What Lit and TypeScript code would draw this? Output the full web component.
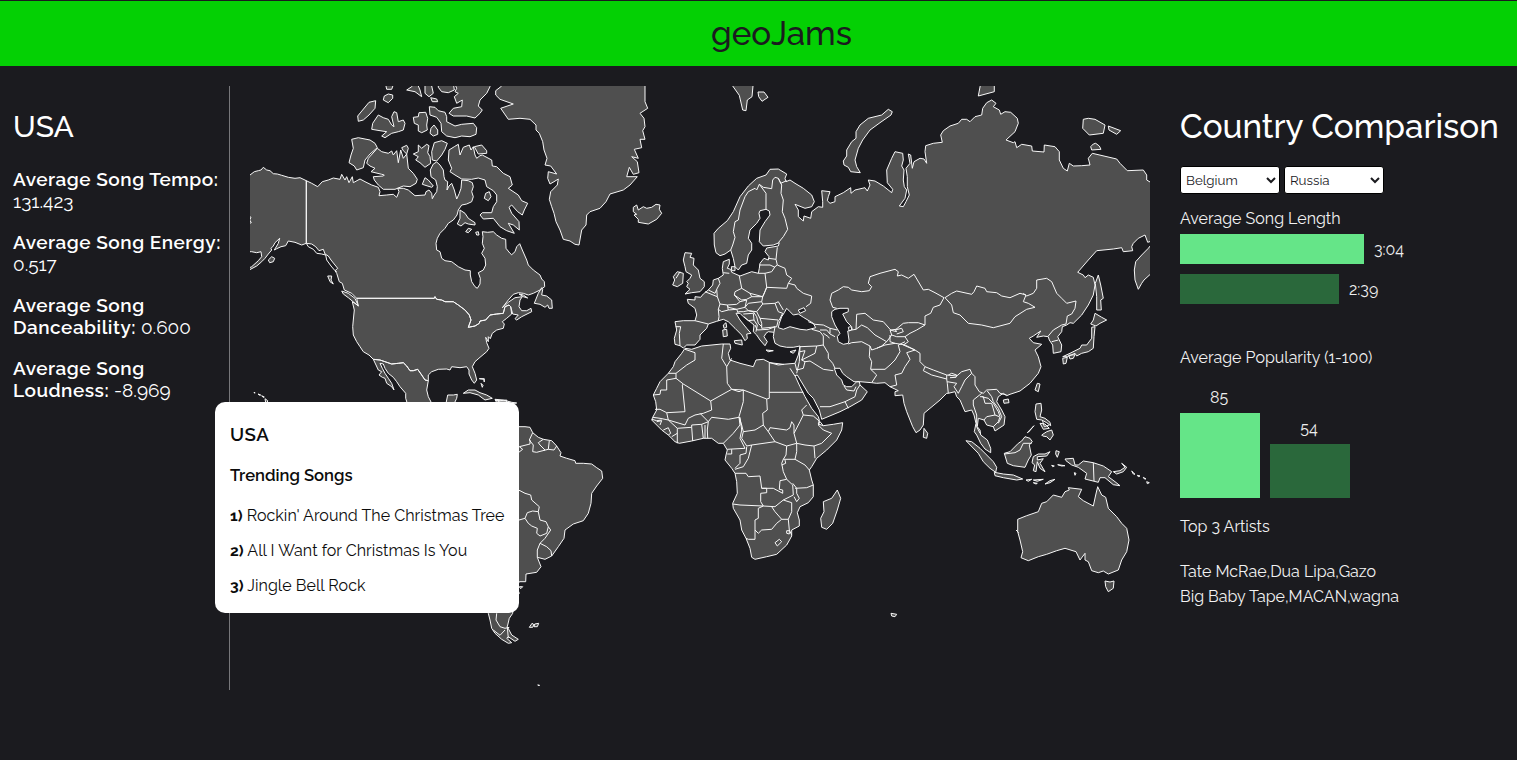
import { LitElement, html, svg, css } from "lit";
import { customElement, property } from "lit/decorators.js";

// Map outlines are digitised on overlapping sheets, three units per map pixel.
const SHEETS: Record<string, [number, number]> = {
  A: [245, 80], B: [245, 240], C: [480, 80], D: [480, 400], E: [640, 150],
  F: [640, 330], G: [780, 80], H: [780, 230], I: [950, 380],
};

function pts(sheet: string, list: string): string {
  const [ox, oy] = SHEETS[sheet];
  return list.trim().split(/\s+/).map((p) => {
    const [x, y] = p.split(",").map(Number);
    return (ox + x / 3).toFixed(1) + "," + (oy + y / 3).toFixed(1);
  }).join(" ");
}
const area = (...parts: string[]) => {
  const out: string[] = [];
  for (let i = 0; i < parts.length; i += 2) out.push(pts(parts[i], parts[i + 1]));
  return "M" + out.join(" ") + "Z";
};
const areas = (sheet: string, lists: string) =>
  lists.split("|").map((l) => area(sheet, l)).join("");
const lines = (sheet: string, lists: string) =>
  lists.split("|").map((l) => "M" + pts(sheet, l)).join("");

const LAND = [
  // Alaska
  area("A", "10,287 15,285 28,275 40,272 48,270 55,262 65,270 75,272 85,281 97,282 110,286 130,292 150,295 165,293 184,302 184,490 170,495 150,487 130,483 122,497 108,500 95,506 88,510 100,490 104,475 90,488 85,498 78,505 80,510 70,522 60,535 50,545 35,558 18,567 10,572 10,565 20,560 40,542 50,530 48,515 35,518 20,515 10,515"),
  areas("A", "70,540 80,530 89,535 85,545 74,548"),
  // Canada
  area("A", "184,302 200,310 218,320 232,305 250,300 265,294 285,298 290,283 300,300 305,290 312,308 322,290 325,308 345,297 360,305 380,315 400,322 405,335 402,347 425,345 445,343 455,352 462,335 458,325 475,325 490,330 510,347 540,345 543,335 552,330 560,340 562,356 568,345 575,335 577,320 572,300 558,290 556,270 565,252 575,246 585,255 595,270 597,290 600,300 608,305 606,330 612,318 620,310 628,330 635,357 643,340 648,325 650,300 670,302 682,308 685,320 680,335 685,350 680,365 665,372 650,375 640,390 636,405 625,420 610,430 600,445 585,460 577,475 573,490 575,510 585,515 590,535 600,542 620,545 640,560 660,570 676,572 676,585 680,605 690,620 697,625 705,612 706,595 700,578 715,570 722,555 720,535 710,520 718,505 712,490 714,470 712,455 728,457 745,455 755,465 770,475 782,478 783,505 795,520 800,524 810,515 815,500 824,491 832,510 845,540 850,555 865,570 885,585 890,597 898,605 899,620 885,630",
    "B", "865,160 850,165 835,160 820,158 805,163 790,180 772,203 790,187 810,173 832,170 825,180 822,200 830,212 845,212 858,205 860,215 830,230 815,240 810,236 820,225 803,222 797,200 792,195 780,200 775,220 755,222 735,225 722,240 705,243 703,250 690,258 670,262 678,240 673,225 660,210 640,195 625,185 600,185 590,180 575,178 570,170 568,175 335,175 320,160 298,150 292,130 283,125 275,100 270,92 278,85 270,75 258,60 250,48 240,42 235,28 222,32 212,20 200,12 184,10"),
  // United States
  area("B", "335,175 568,175 570,170 575,178 590,180 600,185 625,185 640,195 660,210 673,225 678,240 670,262 690,258 703,250 705,243 722,240 735,225 755,222 775,220 780,200 792,195 797,200 800,222 785,235 772,245 778,252 775,265 755,270 742,280 736,296 730,290 730,305 722,292 725,308 732,325 725,335 705,352 690,365 682,380 690,400 695,420 688,430 680,420 672,402 672,390 665,380 645,383 620,380 615,390 605,387 580,388 560,395 550,405 550,422 540,420 530,405 518,388 505,392 495,392 485,378 475,368 460,370 440,372 405,360 385,358 372,345 355,335 345,320 335,305 325,285 323,260 325,240 328,210 322,185 330,190 340,198"),
  area("B", "385,358 405,360 440,372 460,370 475,368 485,378 495,392 505,392 518,388 530,405 540,420 550,422 545,450 550,470 560,490 600,510 490,500 482,475 482,460 465,440 455,425 445,412 430,400 420,385 415,372 405,370 412,385 420,400 430,415 440,430 447,450 440,440 425,430 420,415 412,412 402,405 410,395 400,390 393,375"),
  areas("B", "868,190 880,160 890,143 893,148 890,165 905,168 920,180 922,205 912,205 908,195 900,202 885,193|290,153 310,160 330,175 340,198 330,190 310,173 295,162|248,108 260,108 258,120 265,132 255,125|603,490 608,465 625,465 637,463 635,475 628,490|655,460 670,450 690,450 705,458 725,465 742,475 720,480 700,465 675,458|750,478 775,480 800,487 815,489 790,492 755,488|27,457 30,458 29,460|39,462 47,465 44,466|50,467 58,471 54,472|60,476 68,482 66,490 62,488|822,162 835,165 848,174 835,170|703,416 718,416 718,426 716,418|708,430 714,436 712,442"),
  // Arctic archipelago
  areas("A", "320,178 340,173 375,180 390,190 397,203 375,222 360,240 355,263 335,270 328,258 312,248 318,225 325,205|397,205 410,215 430,220 440,213 445,225 455,212 460,248 467,210 475,235 485,222 490,265 505,280 517,298 513,310 495,320 475,318 450,328 415,328 400,315 388,300 385,290 415,288 418,285 410,283 378,275 390,265 375,258 365,250 370,235|470,203 485,196 490,205 485,222 475,212|372,67 392,62 390,85 372,105 355,120 340,124 338,108|430,42 443,45 443,55 430,68 415,60 418,48|422,14 445,14 440,28 425,28|400,105 415,113 430,118 440,135 447,140 440,110 447,95 455,98 460,125 475,120 480,130 475,150 460,155 440,160 420,173 410,168 425,155 405,152 380,148 383,130|505,112 520,110 522,98 542,97 548,115 545,135 547,150 530,158 520,153 520,135 508,130|567,135 578,150 578,163 565,168 555,160 558,145|553,80 570,82 580,92 600,97 605,110 605,125 630,138 650,133 685,130 695,143 693,163 675,170 650,168 630,173 605,168 590,155 588,130 575,112 555,105|628,8 635,25 630,35 640,40 628,50 635,70 652,60 650,80 625,85 612,100 625,108 665,108 690,114 705,100 712,90 700,78 705,60 725,40 735,20 733,8|485,30 500,20 510,8 520,18 525,30 530,50 510,35|540,8 560,18 565,40 552,50 540,40|557,53 575,57 578,65 562,65|580,8 580,22 590,35 610,38 628,30 625,8|520,195 530,205 545,193 552,197 548,218 555,230 557,250 540,262 525,248 512,240 520,230 505,222 520,215|568,188 590,182 607,190 600,208 590,225 575,243 562,240 560,215|540,293 550,300 565,318 560,322 532,313|655,202 673,195 678,210 685,200 690,225 695,235 705,227 712,225 740,240 742,258 755,260 775,280 795,290 802,315 790,325 820,345 830,362 848,370 838,390 832,405 818,395 800,375 792,382 800,400 822,425 823,450 805,435 790,430 808,460 785,452 765,440 745,415 715,417 705,405 712,398 740,398 745,380 755,365 755,345 745,332 725,320 720,300 700,294 680,298 650,297 630,285 615,275 620,265 610,240 612,210 628,200 640,193 645,225|688,200 710,195 725,212 725,220 700,222|645,390 660,400 670,415 690,428 690,435 670,432 660,428 648,438 637,432 645,415|722,340 733,335 738,350 730,362 718,355|662,455 670,445 680,448 670,458|692,457 700,455 702,465 695,465|10,407 18,412 14,420 19,428 10,432"),
  // Greenland and Iceland
  areas("C", "65,10 65,18 47,32 47,45 60,58 100,72 62,85 85,118 120,115 150,118 168,135 168,150 178,160 188,185 192,210 201,235 195,255 212,258 230,282 205,275 203,295 210,312 222,305 235,297 232,315 212,335 208,358 215,380 222,400 228,425 240,450 250,478 270,483 285,493 297,495 305,450 318,435 320,405 330,395 360,385 378,365 390,342 430,330 450,315 472,290 440,290 448,262 460,283 477,278 472,245 455,230 475,235 463,208 485,203 480,178 495,178 488,152 495,140 492,115 480,100 503,85 495,65 495,10|460,382 470,375 475,390 490,380 500,385 515,382 528,373 540,375 538,388 545,400 530,418 505,432 475,427 475,418 462,405 470,403 460,395"),
  // South America
  area("D", "20,80 100,80 120,80 135,80 150,82 158,98 175,112 190,118 215,122 230,138 243,158 240,168 260,175 285,182 287,190 310,190 335,192 350,203 365,213 368,235 350,258 335,280 333,310 325,340 310,362 280,372 255,390 252,415 235,440 215,468 195,478 172,472 183,500 170,517 138,522 137,545 118,545 110,560 118,580 100,600 98,640 88,655 82,680 95,705 115,718 105,724 85,710 80,715 95,728 85,730 65,718 45,700 35,685 30,660 25,640 20,560"),
  areas("D", "148,682 156,670 162,674 158,682|162,680 164,672 176,670 172,680|118,560 128,560 122,566|173,855 179,856 178,857|45,0 60,2 80,0 80,6 60,6"),
  // Eurasia and Africa
  area("E", "272,300 255,312 240,317 228,308 223,285 222,250 235,235 262,212 280,185 300,140 325,108 350,85 378,75 390,58 415,57 440,72 435,85 438,95 450,90 465,100 490,115 515,135 523,155 515,170 495,175 465,163 475,180 475,200 490,213 492,198 512,205 515,185 535,170 548,172 548,155 545,122 570,125 565,140 562,152 570,160 585,155",
    "G", "165,350 190,338 212,323 213,340 225,330 255,323 262,333 270,315 265,300 285,303 310,318 335,338 338,328 322,308 320,270 335,235 345,215 368,220 370,240 365,258 372,270 370,300 373,320 380,330 375,355 358,378 370,380 378,365 388,345 382,320 382,290 378,265 390,250 385,222 392,225 397,265 402,245 420,235 432,237 440,250 435,215 437,197 460,190 487,187 482,165 490,152 510,138 535,130 545,118 560,118 570,125 585,110 605,105 608,85 620,68 635,60 648,70 640,80 658,90 662,103 675,95 692,97 712,115 715,130 705,155 678,180 700,188 705,185 710,203 725,193 755,198 757,213 792,216 793,195 825,200 838,215 838,240 850,265 862,273 868,250 880,258 905,257 930,255 925,235 937,220 1010,237 1020,250 1042,272 1090,270 1100,285 1100,300 1125,315 1125,480 1103,487 1095,465 1075,475 1060,490 1055,500 1058,512 1030,515 1025,503 1000,507 950,512 925,540 893,577",
    "H", "910,135 915,143 925,135 940,142 945,165 940,195 925,225 905,255 880,280 870,278 860,285 847,290 845,305 833,320 845,345 843,365 820,370 818,345 808,330 805,320 790,318 770,322 782,303 760,318 748,325 760,338 785,343 765,360 775,380 783,410 775,430 750,460 720,483 690,493 680,497 670,490 655,500 650,515 665,540 675,560 672,585 645,603 640,590 620,585 612,570 595,565 592,590",
    "I", "90,150 92,165 112,180 122,205 122,218 105,207 92,190 80,165 73,155 78,130 72,105 65,90 45,95 30,60 20,50",
    "H", "525,485 505,490 500,490 480,510 450,535 432,550 430,585 420,600 408,608 398,590 380,545 372,520 368,495 345,497 345,485 355,482 330,470 315,458 290,460 275,458 240,455 222,455 200,440 188,430 180,415 163,415 170,435 185,450 190,465 200,470 215,470 230,455 238,455 240,465 262,485 245,510 210,530 180,545 125,568 118,540 100,505 85,490 70,465 52,435 45,437 60,470 75,500 95,535 115,560 118,570 115,582 130,587",
    "F", "550,287 580,283 608,278 605,300 590,330 560,360 530,385 515,410 508,420 515,450 520,465 520,500 505,518 480,530 472,548 478,570 478,588 455,600 455,618 440,645 410,673 380,680 345,688 335,682 330,655 318,625 305,600 300,570 280,535 278,520 292,490 290,455 285,430 275,415 255,390 258,375 262,360 250,340 235,340 215,325 190,325 155,333 118,340 105,335 85,315 65,300 50,285 35,270 38,262 50,240 47,215 40,195 50,175 60,155 85,130 100,110 105,95 125,70 135,55 155,58 185,48 245,42 270,42 272,55 265,70 270,90 300,100 340,110 348,90 370,88 390,98 430,103 465,100 475,75",
    "E", "480,588 460,592 440,592 420,588 405,580 400,560 402,547 385,545 378,550 372,560 382,575 375,587 360,570 350,555 340,545 342,525 330,515 310,500 300,490 288,490 300,510 320,535 333,550 320,552 322,565 315,572 305,555 285,535 265,515 250,508 230,514 205,522 200,535 180,555 180,568 165,585 140,585 130,594 120,587 105,583 103,565 110,540 105,515 130,512 165,512 170,495 165,475 145,460 142,448 165,450 165,440 182,442 190,432 205,420 218,405 220,390 235,385 250,375 247,355 250,335 268,328 268,342 262,355 272,358 275,367 300,378 335,365 355,370 358,355 360,340 372,325 385,330 387,320 375,305 380,294 415,288 418,278 400,285 370,288 358,275 360,240 375,215 390,195 388,183 378,178 360,182 357,190 360,205 350,220 330,240 325,265 335,280 335,300 325,315 320,340 305,345 295,360 285,350 280,325"),
  areas("E", "135,308 155,310 150,322 162,325 160,345 175,360 180,385 193,395 193,410 180,425 155,428 135,432 150,418 140,410 145,400 140,395 150,385 155,375 138,365 135,350 130,330|112,365 130,370 128,400 112,410 98,405 104,390 100,380|274,350 285,350 285,362 275,362|248,540 260,538 262,558 250,560|250,525 258,518 260,532 252,535|283,572 305,570 307,585 285,580"),
  areas("F", "378,60 400,62 385,65|450,65 468,60 460,70|592,480 602,505 592,540 578,580 560,598 545,592 542,565 552,545 550,515 575,505"),
  areas("G", "602,10 643,10 643,35 595,48|910,118 925,115 945,118 975,135 970,160 928,165 908,145|985,138 1022,152 1010,163 987,150|932,200 940,192 947,190 958,198 963,208 935,210|325,88 337,95 333,105 300,128 270,150 248,180 235,205 225,240 230,260 241,278 212,275 205,262 192,255 190,243 200,228 200,210 215,185 228,175 228,155 240,135 265,115 305,105|1125,480 1105,505 1085,525 1067,545 1063,570 1065,600 1075,628 1085,610 1092,600 1125,570|-142,18 -122,46 -112,90 -102,92 -98,60 -84,50 -80,8 -142,8|-66,36 -48,36 -36,52 -54,64 -64,50"),
  areas("H", "955,135 962,165 970,205 962,210 964,240 950,240 950,200 946,160|945,250 965,262 980,270 960,280 948,288 932,282 940,270|935,292 945,290 942,320 940,355 925,365 905,370 890,378 885,370 862,380 848,380 870,370 900,355 905,345 920,345 935,325|848,385 862,382 858,400 850,402|866,376 885,374 880,385 870,387|772,460 780,462 775,485 765,480|670,510 685,507 687,518 672,520|432,595 443,610 440,625 430,622|333,1150 350,1153 345,1160 335,1158"),
  areas("I", "258,72 273,70 275,90 270,110 285,115 300,127 302,137 290,128 275,120 260,118 255,95|270,130 285,132 298,145 280,148|275,165 290,155 305,150 310,165 300,180 290,170 278,168|232,158 252,137 236,156|163,220 180,215 205,190 215,183 225,170 240,175 247,185 238,195 244,225 235,240 225,262 190,257 172,250|48,182 65,185 90,205 110,225 130,245 140,262 137,277 120,265 100,245 85,220|133,277 160,282 190,285 218,297 200,300 160,293 135,287|228,300 245,298 235,304|250,300 280,298 262,304|250,308 262,310 258,312|285,312 300,302 315,298 300,308|250,230 265,222 285,222 300,215 290,228 262,230 262,240 280,236 270,250 285,275 270,265 262,245 258,275 250,272 254,255 246,248|318,212 328,215 322,232 317,222|323,254 345,257 335,258|305,256 313,258 308,260|345,237 370,235 375,255 385,255 400,243 430,248 460,258 485,275 475,290 495,305 510,317 490,314 465,293 450,293 445,307 405,297 410,280 385,262 365,255 348,242|490,275 510,272 525,262 515,250 530,262 520,275 500,282|545,273 555,283 550,282|562,286 570,288 565,290|580,292 588,297 582,296|590,305 598,308 592,311|373,278 378,280 375,286|203,418 230,407 265,395 275,370 290,365 310,345 335,352 345,335 358,330 355,323 395,328 385,350 400,362 430,378 437,345 443,320 455,345 467,352 475,385 500,410 515,430 530,445 537,480 530,515 515,540 505,570 475,582 460,573 445,578 425,572 415,545 405,540 405,520 390,540 378,515 345,505 320,512 290,523 265,530 235,542 213,533 218,515 210,480 203,455|465,603 480,606 492,603 490,625 475,635 467,620"),
].join("");

const SEAS = areas("H", "155,245 165,238 180,235 205,235 205,245 188,252 200,275 215,290 215,300 203,303 207,330 205,340 190,343 175,335 172,320 180,310 165,285 155,260|205,292 212,290 217,298 208,303")
  + areas("E", "418,520 425,500 433,488 440,475 450,485 460,495 475,492 490,502 520,520 527,533 500,540 480,538 450,530 430,538 415,533|475,480 492,473 497,482 480,490");

const BORDERS = [
  lines("A", "184,490 190,500 205,508 215,520 230,522 242,525 245,540 258,558 270,572 275,575"),
  lines("D", "158,98 148,120 160,135 158,155 170,157 188,152 195,150 180,135 175,128 190,118|188,152 205,148 208,122|205,148 222,150 230,138|115,158 128,148 118,140 150,132 150,120|110,268 120,272 135,280 152,285 155,300 178,320 175,335 158,333 142,338 135,355 110,362|175,335 180,360 198,365 205,380 200,400 180,408 170,400 172,385 155,378 145,370 135,355|205,380 212,390 195,415 180,430 172,450 172,472|180,430 200,440 213,452 215,468|50,640 48,660 60,680 75,685 88,682|40,690 60,706 75,690|82,680 85,715"),
  lines("E", "272,300 278,285 285,262 280,245 285,215 295,210 300,180 315,140 325,125 345,115 350,120 358,103 370,112 395,116 398,90 405,82 415,85 422,100 440,92|358,103 378,130 378,178|415,85 425,105 423,130 430,150 427,185 435,205 443,238 430,260 415,278|250,368 268,370|235,385 240,400 230,418 232,440 240,462 262,465 290,463 300,455 283,435 285,425 305,415 298,378|305,415 330,430 368,440 380,412 375,370|283,435 305,450 320,448 335,440 330,430|195,425 232,440|205,420 225,430 230,418|240,462 235,478 237,500 235,512|165,512 205,522|107,530 122,530 118,550 120,587|235,478 245,485 265,480 262,465|262,465 265,472 290,478 315,472 320,450 300,455|265,480 290,478 295,490|315,472 325,460 365,455 368,462 350,485 325,482 315,472|335,440 368,440 365,455|368,462 405,460 415,485 428,490 418,510|350,485 360,505 415,510|405,460 415,455 430,480|380,412 375,425 368,440|380,412 440,415 445,400 465,405 470,415 490,430 515,438 512,460 498,470|375,370 395,365 405,350 412,345 435,355 440,375 455,385 445,400|355,370 375,370|358,345 390,345 405,352|385,325 408,328 412,345|408,328 412,292|360,505 365,520 365,535 410,530 415,510|295,485 310,485 325,482 340,485 350,500 355,520 365,530|310,492 340,490 342,510 325,512 312,500|345,525 352,540 385,538 405,530 402,547|342,510 352,525 348,545|108,385 120,365"),
  lines("F", "135,58 165,68 165,90 140,105 108,130 85,130|108,130 108,145 80,150 80,180 62,180 60,193 40,195|108,145 130,162 127,165 135,245 80,248 60,238 45,238|130,162 212,213 275,178 262,160 260,110 245,85 250,42|260,110 275,85|275,178 310,180 380,207 388,205 388,98|388,187 490,187|310,180 310,215 297,260 305,285 310,305 345,300 370,285 368,250 382,240 380,207|275,178 297,185 310,180|212,213 215,240 190,250 165,255 145,265 135,285 85,270 80,248|180,250 205,275 185,283 155,285 155,292 112,295 85,270|297,262 265,268 215,262 205,275 202,300 203,325|297,262 300,285 280,310 265,325 250,340|155,292 158,333|185,283 190,325|195,325 195,285|112,295 112,340|112,310 95,320|70,300 85,293 92,310 85,315|38,262 60,265 85,270|36,268 50,272 65,270|50,275 65,272 60,285|300,262 305,300 300,325 315,355 262,358|310,305 305,325 320,348 335,345 405,335 385,305 370,285|385,305 390,293 440,300 450,293 455,275 462,285 462,310 470,340 440,348 405,335|462,310 480,275 490,255 520,258 540,275 535,285 550,300 575,310 545,340 522,348 495,345 470,340|490,255 485,240 500,225|540,275 550,287|522,348 525,385|470,340 470,365 465,388 495,405 508,420|440,348 438,375 430,388 465,388|335,345 325,385 310,410 285,418|285,430 318,430 325,440 360,438 365,475 400,475 428,490 428,480 418,478 420,452 440,448 430,425 425,400 430,388|425,405 437,400 435,390|262,372 275,372 275,358|285,415 300,400 300,375 318,370 320,350|365,475 380,475 380,488 362,490 362,515 370,528 300,525 278,522|370,528 405,530 430,510 460,495 458,465 440,448|465,475 500,473 520,465|458,460 470,475 470,490 478,505 470,515 462,500|430,510 455,518 455,545 445,568 425,568 405,545 395,530|445,568 448,600 455,615|370,528 355,535 355,565 345,570 345,628 325,628 318,625|345,600 355,610 365,600 395,598 410,580 425,568|405,638 418,628 425,635 412,648 405,638|440,602 448,602 448,612 440,610 440,602|390,98 415,105 432,103|450,115 465,138|465,100 470,120|480,50 478,95 470,130"),
  lines("H", "85,275 105,283 130,285 150,295 172,300|95,298 120,305 130,318 130,345 110,348 60,350|120,300 140,300 150,312 165,320|130,310 145,320 148,325|150,295 150,310|170,235 158,232 150,210 155,190 175,180 190,170 205,172 215,180 245,185 268,182 275,170 265,160 270,140 300,130 345,118 355,125 352,138 365,135 385,145 402,133 430,180 445,178 465,188 492,203 480,225 460,232 452,250 435,258 435,285 415,278 385,278 370,280 348,298 332,300 310,275 280,270 255,250 230,253 228,298|215,300 228,298 245,285 262,293 285,315 320,335 305,348 290,355 275,360 270,348 245,335 215,338 205,342|270,348 268,380 275,395 272,418 290,435 275,458|272,418 315,418 330,405 345,390 360,365 355,345 375,335|290,355 315,345 345,340 375,345 405,360|320,335 335,315 330,300 350,305 345,298|335,315 350,320 375,320 390,310 410,300 435,285|345,300 365,295 370,305 350,312|375,320 385,335 370,345 405,360|330,315 330,335 345,340|405,360 420,370 420,395 435,410 460,420 500,435 530,438 545,425 570,418 575,430 585,440 585,465 598,485 610,490 620,480 650,478 660,490 680,495|435,410 430,422 455,435 500,447 500,435|505,435 515,430 530,435 528,442 510,443|405,360 380,368 390,388 375,410 365,430 345,435 350,465 330,470|500,447 502,460 505,490|502,455 530,460 522,470 535,490|575,430 555,450 545,470 535,490|605,490 580,510 580,525 590,555 590,590 600,610|605,500 625,505 640,520 655,545 660,560 655,575 640,590|600,500 610,500 615,520 635,520 645,555|612,570 620,560 645,555 658,560|622,483 635,500 640,515 655,535 665,560 655,580|495,203 515,190 530,183 575,193 582,185 590,168 615,175 620,185 650,188 665,198 690,203 720,190 738,195 730,215 745,220 765,232 740,238 705,260 690,280 640,293 605,285 565,280 540,255 520,248 515,225 495,203|730,190 740,198 760,190 770,175 770,150 800,145 815,155 830,190 845,205 860,220 888,213 885,235 875,252 862,258 858,282 845,285 820,300 805,318|815,335 835,330|130,345 145,370 145,385 158,400 165,415|110,348 105,370 65,390 75,395 90,393 130,418 160,422|50,420 70,415 75,395|120,530 150,530 195,515 205,535|195,515 225,500 230,480 240,465|192,468 200,480 222,483 228,470|60,365 75,362 65,390"),
  lines("I", "163,222 195,218 210,210 220,190 245,190|430,248 432,303|277,120 283,140 298,135|198,450 206,458"),
].join("");

interface Entry { label: string; value: string; wrap: boolean }

@customElement("world-map")
class WorldMap extends LitElement {
  static styles = css`
    :host { display: block; width: 900px; height: 600px; }
    svg { display: block; overflow: hidden; }
    path { stroke: #f8f8f8; stroke-width: 1; stroke-linejoin: round; }
    .land { fill: #4f4f4f; }
    .sea { fill: #1b1b1f; }
    .border { fill: none; }
  `;
  render() {
    return html`<svg width="900" height="600" viewBox="250 86 900 600">
      ${svg`<path class="land" d=${LAND}></path><path class="sea" d=${SEAS}></path><path class="border" d=${BORDERS}></path>`}
    </svg>`;
  }
}

@customElement("trend-card")
class TrendCard extends LitElement {
  @property() country = "USA";
  songs = ["Rockin' Around The Christmas Tree", "All I Want for Christmas Is You", "Jingle Bell Rock"];
  static styles = css`
    :host { display: block; box-sizing: border-box; width: 304px; height: 211px; padding: 21px 15px 0;
      background: #fff; color: #0c0c0c; border-radius: 10px; font-size: 16px; white-space: nowrap; }
    h3 { margin: 0; font-size: 18.72px; line-height: 22px; font-weight: 600; letter-spacing: 0.5px; }
    h4 { margin: 20px 0 21px; font-size: 16.6px; line-height: 20px; font-weight: 600; }
    p { margin: 0 0 15px; line-height: 20px; letter-spacing: 0.04px; }
    b { font-weight: 700; font-size: 15.6px; }
  `;
  render() {
    return html`<h3>${this.country}</h3><h4>Trending Songs</h4>
      ${this.songs.map((name, i) => html`<p><b>${i + 1})</b> ${name}</p>`)}`;
  }
}

@customElement("app-root")
class AppRoot extends LitElement {
  stats: Entry[] = [
    { label: "Average Song Tempo:", value: "131.423", wrap: true },
    { label: "Average Song Energy:", value: "0.517", wrap: true },
    { label: "Average Song Danceability:", value: "0.600", wrap: false },
    { label: "Average Song Loudness:", value: "-8.969", wrap: false },
  ];
  lengths = [{ w: 184, t: "3:04" }, { w: 159, t: "2:39" }];
  popularity = [{ h: 85, t: "85" }, { h: 54, t: "54" }];

  static styles = css`
    :host { display: block; box-sizing: border-box; height: 760px; padding-top: 1px; overflow: hidden;
      background: #1b1b1f; color: #fff; font-family: Raleway, Lato, sans-serif;
      font-variant-numeric: oldstyle-nums; font-size: 16px; }
    header { box-sizing: border-box; height: 65px; background: #04d004; color: #1b1b1f; display: flex; align-items: center;
      justify-content: center; padding: 1px 0 0 46px; font-size: 33.2px; line-height: 40px; font-weight: 500; }
    .app { display: flex; padding-top: 20px; position: relative; }
    .side { box-sizing: border-box; width: 230px; height: 604px; border-right: 1px solid #77777a; padding: 22px 6px 0 13px; }
    .side h2 { margin: 0 0 22px; font-size: 30px; line-height: 38px; font-weight: 500; }
    .side p { margin: 0 0 19px; font-size: 19px; line-height: 22px; }
    .side b { font-weight: 600; letter-spacing: 0.5px; }
    .line { display: block; }
    world-map { margin-left: 20px; }
    .compare { margin-left: 30px; width: 337px; padding-top: 21px; }
    .compare h1 { margin: 0; font-size: 33.2px; line-height: 40px; font-weight: 500; white-space: nowrap; }
    .picks { display: flex; gap: 4px; margin-top: 19px; }
    select { width: 100px; height: 28px; border: 1px solid #000; border-radius: 3px; background: #fff;
      color: #1b1b1f; font-family: Raleway, Lato, sans-serif; font-size: 13.33px; padding: 0 1px; }
    .label { line-height: 20px; color: #f2f2f2; }
    .len { margin-top: 15px; margin-bottom: 5px; }
    .hrow { display: flex; align-items: center; gap: 10px; height: 30px; margin-bottom: 10px; color: #eee; }
    .bar { background: #65e588; }
    .bar.second { background: #2a683b; }
    .hrow .bar { height: 30px; }
    .pop { margin-top: 44px; }
    .cols { display: flex; align-items: flex-end; gap: 10px; height: 130px; }
    .col { width: 80px; text-align: center; color: #eee; }
    .num { display: block; line-height: 20px; margin-bottom: 5px; padding-right: 2px; }
    .top { margin-top: 19px; }
    .artists { margin-top: 22px; line-height: 25px; color: #f2f2f2; white-space: nowrap; }
    trend-card { position: absolute; left: 215px; top: 336px; }
  `;

  render() {
    return html`
      <header>geoJams</header>
      <div class="app">
        <section class="side">
          <h2>USA</h2>
          ${this.stats.map((s) => html`<p><b>${s.label}</b> ${s.wrap ? html`<span class="line">${s.value}</span>` : s.value}</p>`)}
        </section>
        <world-map></world-map>
        <section class="compare">
          <h1>Country Comparison</h1>
          <div class="picks">
            <select><option>Belgium</option></select>
            <select><option>Russia</option></select>
          </div>
          <div class="label len">Average Song Length</div>
          ${this.lengths.map((l, i) => html`<div class="hrow"><div class="bar ${i ? "second" : ""}" style="width:${l.w}px"></div><span>${l.t}</span></div>`)}
          <div class="label pop">Average Popularity (1-100)</div>
          <div class="cols">
            ${this.popularity.map((p, i) => html`<div class="col"><span class="num">${p.t}</span><div class="bar ${i ? "second" : ""}" style="height:${p.h}px"></div></div>`)}
          </div>
          <div class="label top">Top 3 Artists</div>
          <div class="artists"><div>Tate McRae,Dua Lipa,Gazo</div><div>Big Baby Tape,MACAN,wagna</div></div>
        </section>
        <trend-card country="USA"></trend-card>
      </div>
    `;
  }
}
